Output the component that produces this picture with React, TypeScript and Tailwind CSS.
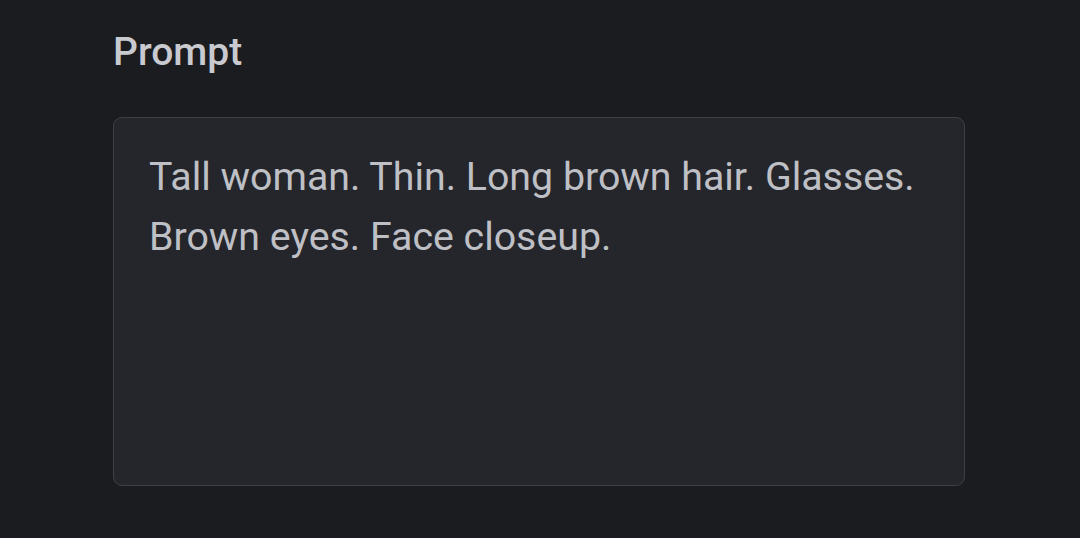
export default function App() {
  return (
    <div className="w-[1080px] h-[538px] bg-[#1b1c20] pl-[113px] pt-[26px]" style={{ fontFamily: "Roboto, sans-serif" }}>
      <div className="text-[39px] font-medium text-[#c9cacf] leading-[52px]">Prompt</div>
      <div className="mt-[39px] w-[852px] h-[369px] rounded-[9px] border border-[#3e3f45] bg-[#25262c] px-[35px] pt-[29px] text-[39.3px] leading-[60px] text-[#bfc0c5]">
        Tall woman. Thin. Long brown hair. Glasses.
        <br />
        Brown eyes. Face closeup.
      </div>
    </div>
  );
}
